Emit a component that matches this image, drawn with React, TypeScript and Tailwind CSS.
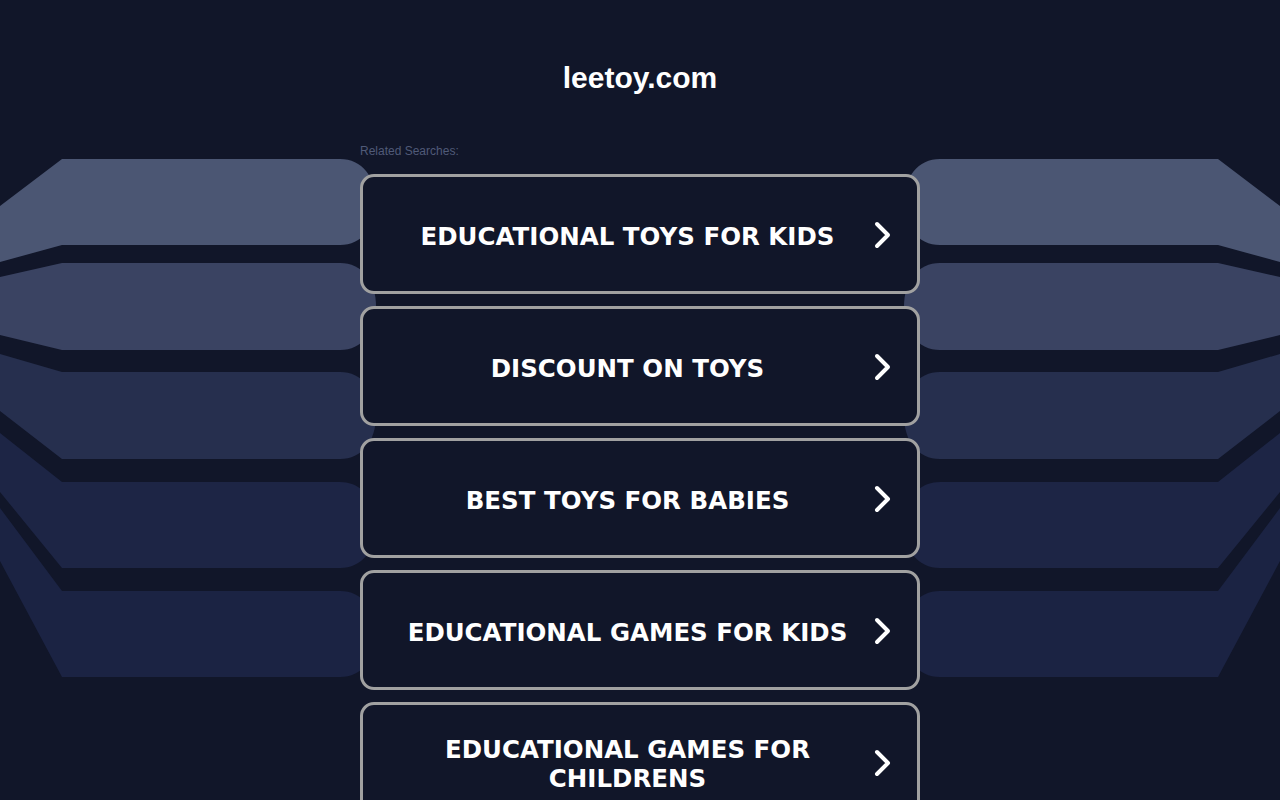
const items = [
  "Educational Toys for Kids",
  "Discount on Toys",
  "Best Toys for Babies",
  "Educational Games for Kids",
  "Educational Games for Childrens",
];

// left-side band geometry: [y at x=0 top, top y, bottom y, y at x=0 bottom, colour]
const bands: [number, number, number, number, string][] = [
  [206, 159, 245, 262, "#4b5673"],
  [277, 263, 350, 335, "#3a4362"],
  [354, 372, 459, 411, "#262f4e"],
  [433, 482, 568, 492, "#1d2545"],
  [508, 591, 677, 561, "#1b2343"],
];

function bandPath([y0, t, b, y1]: [number, number, number, number, string]) {
  const m = (t + b) / 2;
  return `M0,${y0} L62,${t} L340,${t} C362,${t} 376,${t + 18} 376,${m} C376,${b - 18} 362,${b} 340,${b} L62,${b} L0,${y1} Z`;
}

function Backdrop() {
  return (
    <svg
      className="absolute left-0 top-0"
      width="1280"
      height="800"
      viewBox="0 0 1280 800"
      aria-hidden="true"
    >
      {bands.map((band, i) => (
        <path key={`l${i}`} d={bandPath(band)} fill={band[4]} />
      ))}
      <g transform="translate(1280,0) scale(-1,1)">
        {bands.map((band, i) => (
          <path key={`r${i}`} d={bandPath(band)} fill={band[4]} />
        ))}
      </g>
    </svg>
  );
}

function Chevron() {
  return (
    <svg width="20" height="28" viewBox="0 0 20 28" className="shrink-0 translate-x-px translate-y-px">
      <path
        d="M4,3 L15,14 L4,25"
        fill="none"
        stroke="#ffffff"
        strokeWidth="4"
        strokeLinecap="round"
        strokeLinejoin="round"
      />
    </svg>
  );
}

export default function App() {
  return (
    <div className="relative min-h-[800px] w-full overflow-hidden bg-[#111629]">
      <Backdrop />
      <div className="relative mx-auto w-[560px]">
        <h1
          className="pt-[61px] text-center text-[30px] font-bold leading-[33px] text-white"
          style={{ fontFamily: '"Liberation Sans", Arial, sans-serif' }}
        >
          leetoy.com
        </h1>
        <p
          className="mt-[51px] text-[12px] leading-[13px] text-[#505a78]"
          style={{ fontFamily: '"Liberation Sans", Arial, sans-serif' }}
        >
          Related Searches:
        </p>
        <div className="mt-[16px] flex flex-col gap-3">
          {items.map((label) => (
            <a
              key={label}
              href="#"
              className="flex h-[120px] items-center rounded-[14px] border-[3px] border-[#a1a1a1] bg-[#111629] pl-5 pr-[25px]"
            >
              <span
                className="flex-1 pt-1 text-center text-[24.5px] font-bold uppercase leading-[29px] text-white"
                style={{ fontFamily: '"DejaVu Sans", Verdana, sans-serif' }}
              >
                {label}
              </span>
              <Chevron />
            </a>
          ))}
        </div>
      </div>
    </div>
  );
}
